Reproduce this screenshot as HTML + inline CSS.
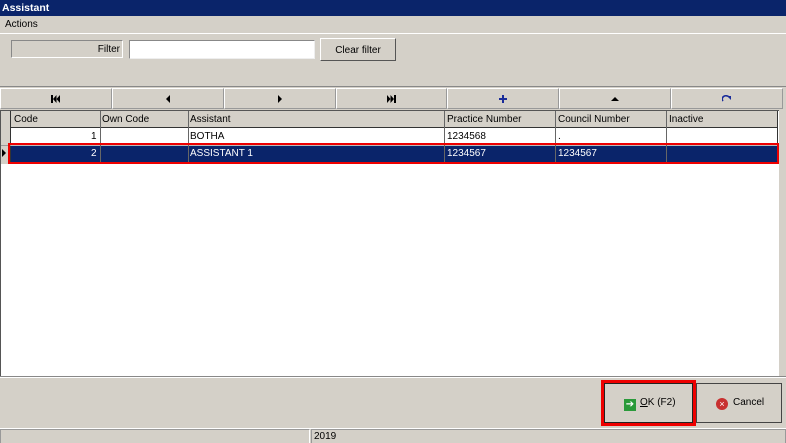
<!DOCTYPE html><html><head><style>
*{margin:0;padding:0;box-sizing:border-box}
body{width:786px;height:443px;background:#d4d0c8;font-family:"Liberation Sans",sans-serif;font-size:10px;position:relative;overflow:hidden;color:#000}
.a{position:absolute}
.t{white-space:nowrap}
.nb{flex:1;border:1px solid #fff;border-right-color:#999;border-bottom-color:#999;display:flex;align-items:center;justify-content:center}
</style></head><body>
<div class="a" style="left:0;top:0;width:786px;height:16px;background:#0a246a;color:#fff;font-weight:bold;padding:2px 2px;font-size:10.5px">Assistant</div>
<div class="a t" style="left:5px;top:19px">Actions</div>
<div class="a" style="left:0;top:33px;width:786px;height:1px;background:#fff"></div>
<div class="a t" style="left:11px;top:40px;width:112px;height:18px;border:1px solid #888;border-right-color:#fff;border-bottom-color:#fff;text-align:right;padding:3px 2px">Filter</div>
<div class="a" style="left:129px;top:40px;width:186px;height:19px;background:#fff;border:1px solid #888;border-right-color:#eee;border-bottom-color:#eee"></div>
<div class="a t" style="left:320px;top:38px;width:76px;height:23px;border:1px solid #fff;border-right-color:#555;border-bottom-color:#555;text-align:center;padding-top:6px">Clear filter</div>
<div class="a" style="left:0;top:86px;width:786px;height:1px;background:#888"></div>
<div class="a" style="left:0;top:88px;width:783px;height:21px;display:flex">
<div class="nb"><svg width="9" height="8"><rect x="0" y="0" width="2" height="8"/><path d="M2 4L5.5 0V8Z M5.5 4L9 0V8Z"/></svg></div>
<div class="nb"><svg width="4" height="8"><path d="M0 4L4 0V8Z"/></svg></div>
<div class="nb"><svg width="4" height="8"><path d="M0 0L4 4L0 8Z"/></svg></div>
<div class="nb"><svg width="9" height="8"><path d="M0 0L3.5 4L0 8Z M3.5 0L7 4L3.5 8Z"/><rect x="7" y="0" width="2" height="8"/></svg></div>
<div class="nb"><svg width="8" height="8"><path d="M3 0H5V3H8V5H5V8H3V5H0V3H3Z" fill="#1a2c9a"/></svg></div>
<div class="nb"><svg width="8" height="4"><path d="M0 4L4 0L8 4Z"/></svg></div>
<div class="nb"><svg width="10" height="8"><path d="M1 6A3.5 3 0 0 1 7 2" stroke="#1a2c9a" stroke-width="1.6" fill="none"/><path d="M5 1H9V5Z" fill="#1a2c9a"/></svg></div>
</div>
<div class="a" style="left:0;top:110px;width:779px;height:266px;background:#fff;border-top:1px solid #555;border-left:1px solid #555"></div>
<div class="a" style="left:1px;top:111px;width:777px;height:17px;background:#d4d0c8;border-bottom:1px solid #333"></div>
<div class="a" style="left:777px;top:111px;width:1px;height:53px;background:#333"></div>
<div class="a" style="left:1px;top:111px;width:10px;height:53px;background:#d4d0c8;border-right:1px solid #333"></div>
<div class="a" style="left:1px;top:145px;width:10px;height:1px;background:#999"></div>
<div class="a" style="left:2px;top:149px;width:0;height:0;border-left:4px solid #000;border-top:4px solid transparent;border-bottom:4px solid transparent"></div>
<div class="a" style="left:11px;top:146px;width:766px;height:16px;background:#0a246a"></div>
<div class="a" style="left:11px;top:145px;width:766px;height:1px;background:#bbb"></div>
<div class="a" style="left:11px;top:162px;width:766px;height:1px;background:#999"></div>
<div class="a" style="left:100px;top:111px;width:1px;height:52px;background:#666"></div>
<div class="a" style="left:188px;top:111px;width:1px;height:52px;background:#666"></div>
<div class="a" style="left:444px;top:111px;width:1px;height:52px;background:#666"></div>
<div class="a" style="left:555px;top:111px;width:1px;height:52px;background:#666"></div>
<div class="a" style="left:666px;top:111px;width:1px;height:52px;background:#666"></div>
<div class="a t" style="left:14px;top:114px">Code</div>
<div class="a t" style="left:102px;top:114px">Own Code</div>
<div class="a t" style="left:190px;top:114px">Assistant</div>
<div class="a t" style="left:447px;top:114px">Practice Number</div>
<div class="a t" style="left:558px;top:114px">Council Number</div>
<div class="a t" style="left:669px;top:114px">Inactive</div>
<div class="a t" style="left:91px;top:131px">1</div>
<div class="a t" style="left:190px;top:131px">BOTHA</div>
<div class="a t" style="left:447px;top:131px">1234568</div>
<div class="a t" style="left:558px;top:131px">.</div>
<div class="a t" style="left:91px;top:148px;color:#fff">2</div>
<div class="a t" style="left:190px;top:148px;color:#fff">ASSISTANT 1</div>
<div class="a t" style="left:447px;top:148px;color:#fff">1234567</div>
<div class="a t" style="left:558px;top:148px;color:#fff">1234567</div>
<div class="a" style="left:8px;top:143px;width:771px;height:21px;border:2px solid #e00"></div>
<div class="a" style="left:0;top:376px;width:786px;height:1px;background:#888"></div>
<div class="a" style="left:0;top:377px;width:786px;height:1px;background:#fff"></div>
<div class="a" style="left:601px;top:380px;width:95px;height:46px;border:3px solid #e00"></div>
<div class="a t" style="left:604px;top:383px;width:89px;height:40px;border:1px solid #222;padding-top:13px;padding-left:19px"><span style="display:inline-block;width:12px;height:12px;background:#2a9a3a;color:#fff;font-size:10px;line-height:12px;text-align:center;vertical-align:-2px;margin-right:4px">➔</span><u>O</u>K (F2)</div>
<div class="a t" style="left:696px;top:383px;width:86px;height:40px;border:1px solid #444;padding-top:13px;padding-left:19px"><span style="display:inline-block;width:12px;height:12px;border-radius:6px;background:#c83030;color:#fff;font-size:9px;line-height:12px;text-align:center;vertical-align:-2px;margin-right:5px">×</span>Cancel</div>
<div class="a" style="left:0;top:428px;width:786px;height:1px;background:#fff"></div>
<div class="a" style="left:0;top:429px;width:310px;height:14px;border:1px solid #999;border-right-color:#fff;border-bottom:none"></div>
<div class="a t" style="left:311px;top:429px;width:475px;height:14px;border:1px solid #999;border-bottom:none;padding:1px 2px">2019</div>
</body></html>
